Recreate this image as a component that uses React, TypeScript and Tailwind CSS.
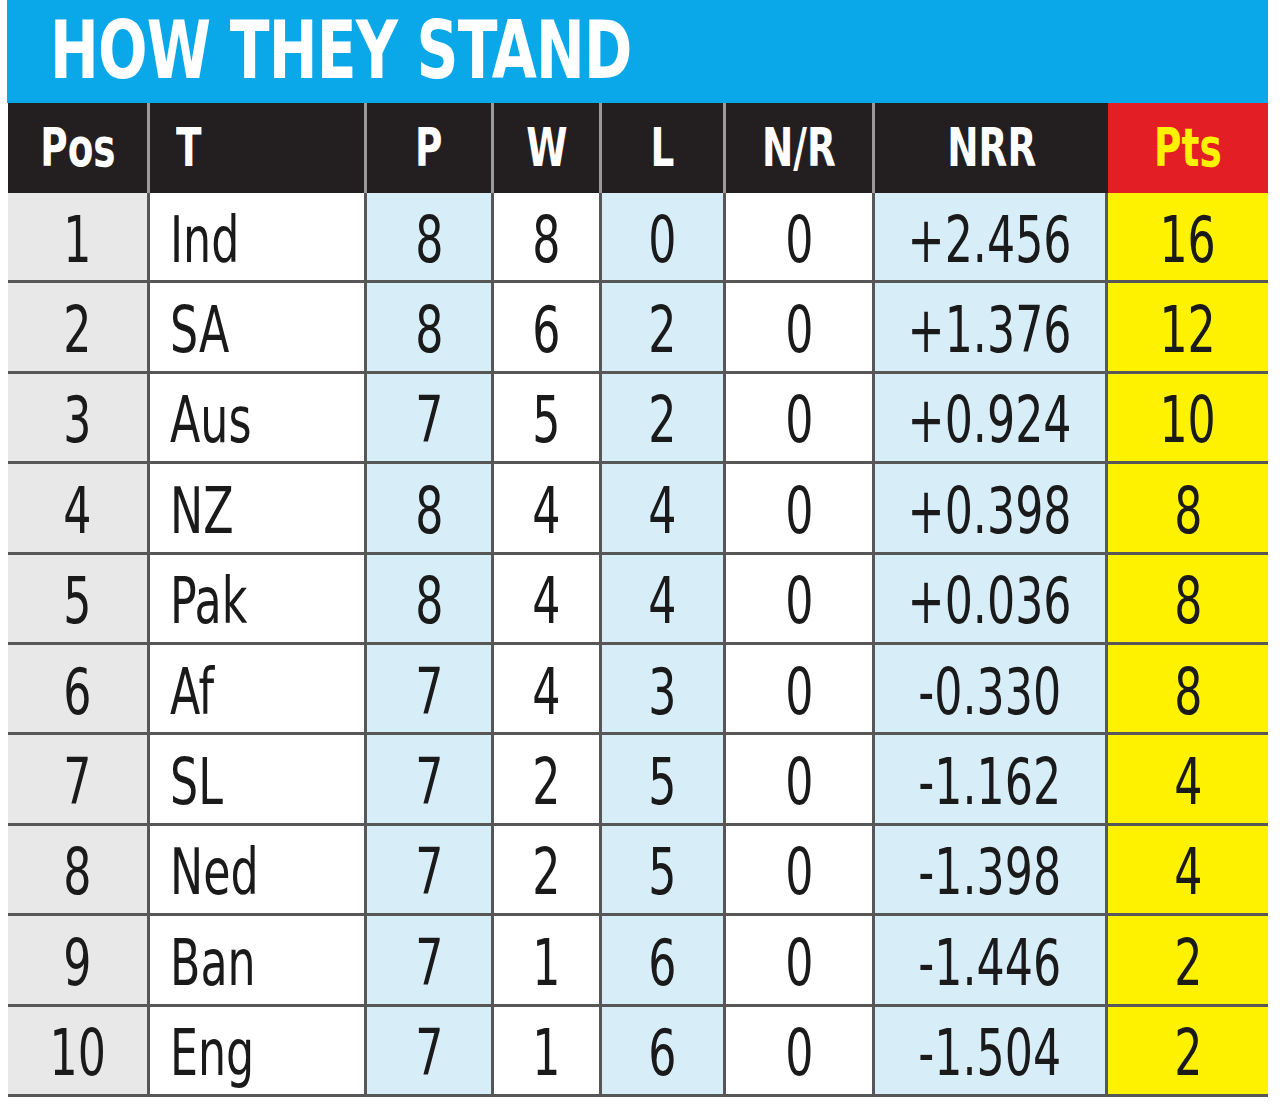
const rows = [
  { pos: 1, team: 'Ind', p: 8, w: 8, l: 0, nr: 0, nrr: '+2.456', pts: 16 },
  { pos: 2, team: 'SA', p: 8, w: 6, l: 2, nr: 0, nrr: '+1.376', pts: 12 },
  { pos: 3, team: 'Aus', p: 7, w: 5, l: 2, nr: 0, nrr: '+0.924', pts: 10 },
  { pos: 4, team: 'NZ', p: 8, w: 4, l: 4, nr: 0, nrr: '+0.398', pts: 8 },
  { pos: 5, team: 'Pak', p: 8, w: 4, l: 4, nr: 0, nrr: '+0.036', pts: 8 },
  { pos: 6, team: 'Af', p: 7, w: 4, l: 3, nr: 0, nrr: '-0.330', pts: 8 },
  { pos: 7, team: 'SL', p: 7, w: 2, l: 5, nr: 0, nrr: '-1.162', pts: 4 },
  { pos: 8, team: 'Ned', p: 7, w: 2, l: 5, nr: 0, nrr: '-1.398', pts: 4 },
  { pos: 9, team: 'Ban', p: 7, w: 1, l: 6, nr: 0, nrr: '-1.446', pts: 2 },
  { pos: 10, team: 'Eng', p: 7, w: 1, l: 6, nr: 0, nrr: '-1.504', pts: 2 },
];

const cols = 'grid grid-cols-[142px_217px_127px_108px_124px_149px_233px_160px]';

// narrow the condensed face further so it reads like the newsprint type
function N({ children, left }: { children: React.ReactNode; left?: boolean }) {
  return (
    <span className={`inline-block whitespace-nowrap scale-x-[0.77] ${left ? 'origin-left' : 'origin-center'}`}>
      {children}
    </span>
  );
}

export default function App() {
  return (
    <div className="w-[1280px] h-[1118px] bg-white font-['DejaVu_Sans_Condensed','Liberation_Sans_Narrow','Liberation_Sans',sans-serif]">
      {/* title bar */}
      <div className="ml-[7px] w-[1261px] h-[103px] bg-[#0aa8e8] flex items-center pl-[43px]">
        <h1 className="text-white font-bold text-[80px] leading-none tracking-[-1px] mt-[-2px] inline-block whitespace-nowrap scale-x-[0.81] origin-left">
          HOW THEY STAND
        </h1>
      </div>

      <div className="ml-[8px] w-[1260px]">
        {/* header */}
        <div className={`${cols} h-[90px] text-white font-bold text-[54px] leading-none`}>
          <div className="bg-[#231f20] flex items-center justify-center border-r-[3px] border-[#9a9a9a]"><N>Pos</N></div>
          <div className="bg-[#231f20] flex items-center pl-[26px] border-r-[3px] border-[#9a9a9a]"><N left>T</N></div>
          <div className="bg-[#231f20] flex items-center justify-center border-r-[3px] border-[#9a9a9a]"><N>P</N></div>
          <div className="bg-[#231f20] flex items-center justify-center border-r-[3px] border-[#9a9a9a]"><N>W</N></div>
          <div className="bg-[#231f20] flex items-center justify-center border-r-[3px] border-[#9a9a9a]"><N>L</N></div>
          <div className="bg-[#231f20] flex items-center justify-center border-r-[3px] border-[#9a9a9a]"><N>N/R</N></div>
          <div className="bg-[#231f20] flex items-center justify-center"><N>NRR</N></div>
          <div className="bg-[#e31e24] text-[#fff200] flex items-center justify-center"><N>Pts</N></div>
        </div>

        {/* rows */}
        {rows.map((r) => (
          <div
            key={r.pos}
            className={`${cols} h-[90.4px] border-b-[3px] border-[#575757] text-[#1a1a1a] text-[64px] leading-none`}
          >
            <div className="bg-[#e8e8e8] flex items-center justify-center pt-[6px] border-r-[3px] border-[#575757]"><N>{r.pos}</N></div>
            <div className="bg-white flex items-center pl-[20px] pt-[6px] border-r-[3px] border-[#575757]"><N left>{r.team}</N></div>
            <div className="bg-[#d7eef9] flex items-center justify-center pt-[6px] border-r-[3px] border-[#575757]"><N>{r.p}</N></div>
            <div className="bg-white flex items-center justify-center pt-[6px] border-r-[3px] border-[#575757]"><N>{r.w}</N></div>
            <div className="bg-[#d7eef9] flex items-center justify-center pt-[6px] border-r-[3px] border-[#575757]"><N>{r.l}</N></div>
            <div className="bg-white flex items-center justify-center pt-[6px] border-r-[3px] border-[#575757]"><N>{r.nr}</N></div>
            <div className="bg-[#d7eef9] flex items-center justify-center pt-[6px] border-r-[3px] border-[#575757]"><N>{r.nrr}</N></div>
            <div className="bg-[#fff200] flex items-center justify-center pt-[6px]"><N>{r.pts}</N></div>
          </div>
        ))}
      </div>
    </div>
  );
}
